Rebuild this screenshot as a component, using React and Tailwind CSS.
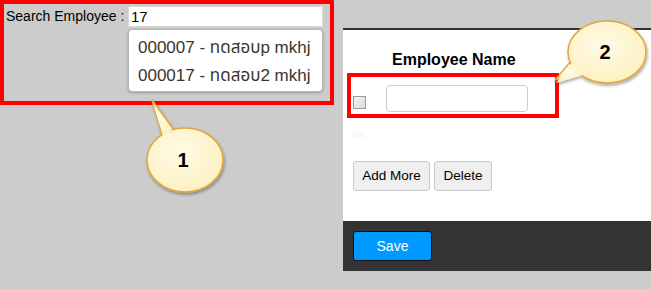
import React from "react";

function Callout({ n, className, tip, base1, base2, cx, cy, rx, ry }) {
  return (
    <svg className={className} width="651" height="289" viewBox="0 0 651 289">
      <defs>
        <radialGradient id={`g${n}`} cx="45%" cy="40%" r="65%">
          <stop offset="0%" stopColor="#fffbe6" />
          <stop offset="100%" stopColor="#fdf0bf" />
        </radialGradient>
        <filter id={`s${n}`} x="-30%" y="-30%" width="160%" height="160%">
          <feDropShadow dx="1" dy="2" stdDeviation="1.5" floodColor="#000" floodOpacity="0.35" />
        </filter>
      </defs>
      <g filter={`url(#s${n})`}>
        <path
          d={`M${base1[0]} ${base1[1]} L${tip[0]} ${tip[1]} L${base2[0]} ${base2[1]}`}
          fill={`url(#g${n})`}
          stroke="#e2a63c"
          strokeWidth="1.5"
          strokeLinejoin="round"
        />
        <ellipse cx={cx} cy={cy} rx={rx} ry={ry} fill={`url(#g${n})`} stroke="#e2a63c" strokeWidth="1.5" />
        <path
          d={`M${base1[0] + 1} ${base1[1] + 2} L${tip[0] + 1} ${tip[1] + 3} L${base2[0] - 1} ${base2[1] + 2} Z`}
          fill={`url(#g${n})`}
        />
      </g>
      <text
        x={cx - 2}
        y={cy + 7}
        textAnchor="middle"
        fontFamily="Liberation Sans, Arial, sans-serif"
        fontWeight="bold"
        fontSize="20"
        fill="#000"
      >
        {n}
      </text>
    </svg>
  );
}

export default function App() {
  return (
    <div
      className="relative w-[651px] h-[289px] overflow-hidden bg-[#cccccc] flex items-start text-[13px] text-black"
      style={{ fontFamily: '"Liberation Sans", Arial, "Noto Sans Thai", "DejaVu Sans", sans-serif' }}
    >
      {/* search area */}
      <div className="w-[334px] h-[105px] border-4 border-[#ff0000] flex items-start shrink-0">
        <span className="ml-[2px] mt-[4px] w-[122px] leading-[16px] text-[14px]">Search Employee :</span>
        <div className="mt-[2px] flex flex-col">
          <div className="w-[195px] h-[21px] bg-white border border-[#d9d9d9] pl-[2px] leading-[19px] text-[15px]">
            17
          </div>
          <div className="mt-[2px] w-[195px] h-[63px] bg-white border border-[#b5b5b5] rounded-[4px] shadow-[0_1px_3px_rgba(0,0,0,0.25)] pl-[9px] pt-[4px] text-[17px] text-[#3b342c] whitespace-nowrap">
            <div className="h-[28px] leading-[28px]">000007 - ทดสอบp mkhj</div>
            <div className="h-[28px] leading-[28px]">000017 - ทดสอบ2 mkhj</div>
          </div>
        </div>
      </div>

      {/* form panel */}
      <div className="ml-[9px] mt-[28px] flex-1 h-[243px] flex flex-col border-t-2 border-[#333333]">
        <div className="flex-1 bg-white flex flex-col">
          <div className="ml-[49px] mt-[21px] font-bold text-[16px] leading-[18px]">Employee Name</div>
          <div className="ml-[4px] mt-[4px] w-[212px] h-[45px] border-4 border-[#ff0000] flex items-start">
            <input
              type="checkbox"
              className="ml-[2px] mt-[19px] w-[13px] h-[13px] m-0 appearance-none border border-[#9a9a9a] bg-gradient-to-br from-[#f4f4f4] to-[#dcdcdc]"
            />
            <div className="ml-[20px] mt-[8px] w-[142px] h-[27px] bg-white border border-[#cccccc] rounded-[4px]" />
          </div>
          <div className="ml-[10px] mt-[13px] w-[12px] h-[7px] bg-[#fafafa]" />
          <div className="ml-[10px] mt-[23px] flex gap-[4px]">
            <button className="w-[77px] h-[30px] bg-[#efefef] border border-[#c8c8c8] rounded-[3px] text-[13.5px]">
              Add More
            </button>
            <button className="w-[58px] h-[30px] bg-[#efefef] border border-[#c8c8c8] rounded-[3px] text-[13.5px]">
              Delete
            </button>
          </div>
        </div>
        <div className="h-[50px] bg-[#333333] pl-[10px] pt-[10px]">
          <button className="w-[79px] h-[30px] bg-[#0099ff] border border-[#111] rounded-[3px] text-white text-[14px]">
            Save
          </button>
        </div>
      </div>

      <Callout
        n="1"
        className="absolute left-0 top-0 pointer-events-none"
        tip={[152, 100]}
        base1={[162, 134]}
        base2={[174, 130]}
        cx={185}
        cy={160}
        rx={38}
        ry={32}
      />
      <Callout
        n="2"
        className="absolute left-0 top-0 pointer-events-none"
        tip={[555, 80]}
        base1={[571, 61]}
        base2={[584, 73]}
        cx={607}
        cy={52}
        rx={39}
        ry={31}
      />
    </div>
  );
}
